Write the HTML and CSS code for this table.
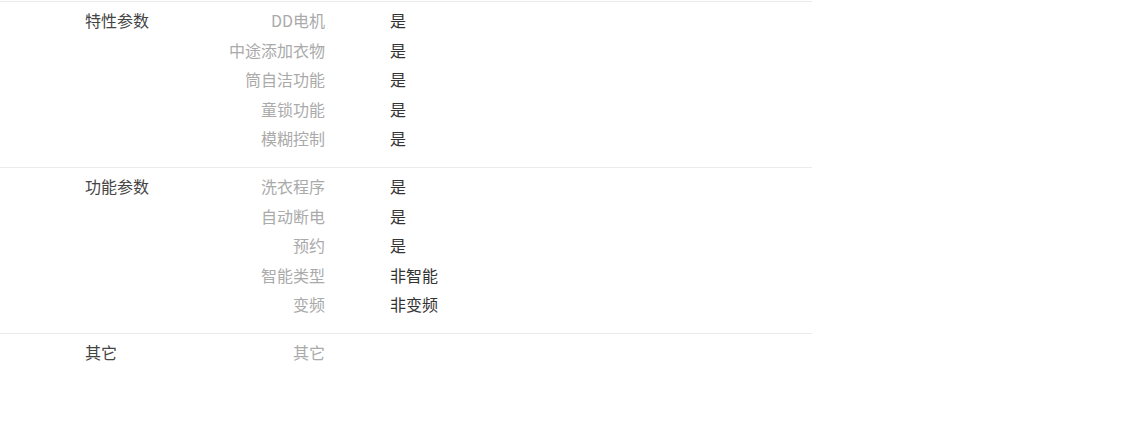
FILE: index.html
```html
<!DOCTYPE html>
<html lang="zh-CN">
<head>
    <meta charset="UTF-8">
    <title>参数</title>
    <link rel="stylesheet" href="styles.css">
</head>
<body>
    <div class="params">
        <div class="group">
            <div class="group-title">特性参数</div>
            <div class="rows">
                <div class="row"><span class="label">DD电机</span><span class="value">是</span></div>
                <div class="row"><span class="label">中途添加衣物</span><span class="value">是</span></div>
                <div class="row"><span class="label">筒自洁功能</span><span class="value">是</span></div>
                <div class="row"><span class="label">童锁功能</span><span class="value">是</span></div>
                <div class="row"><span class="label">模糊控制</span><span class="value">是</span></div>
            </div>
        </div>
        <div class="group">
            <div class="group-title">功能参数</div>
            <div class="rows">
                <div class="row"><span class="label">洗衣程序</span><span class="value">是</span></div>
                <div class="row"><span class="label">自动断电</span><span class="value">是</span></div>
                <div class="row"><span class="label">预约</span><span class="value">是</span></div>
                <div class="row"><span class="label">智能类型</span><span class="value">非智能</span></div>
                <div class="row"><span class="label">变频</span><span class="value">非变频</span></div>
            </div>
        </div>
        <div class="group">
            <div class="group-title">其它</div>
            <div class="rows">
                <div class="row"><span class="label">其它</span><span class="value"></span></div>
            </div>
        </div>
    </div>
</body>
</html>
```

FILE: styles.css
```css
body {
    margin: 0;
    padding-top: 1px;
    background-color: #fff;
    font-family: "Noto Sans CJK SC", "Noto Sans", sans-serif;
    font-size: 16px;
}
.params {
    width: 812px;
}
.group {
    display: flex;
    border-top: 1px solid #ebebeb;
    padding: 4.25px 0 13.25px;
}
.group-title {
    flex: 0 0 226px;
    box-sizing: border-box;
    padding-left: 85px;
    line-height: 29.5px;
    color: #444;
}
.row {
    display: flex;
    line-height: 29.5px;
}
.label {
    width: 99px;
    text-align: right;
    color: #aaa;
}
.value {
    margin-left: 65px;
    color: #333;
}
```
